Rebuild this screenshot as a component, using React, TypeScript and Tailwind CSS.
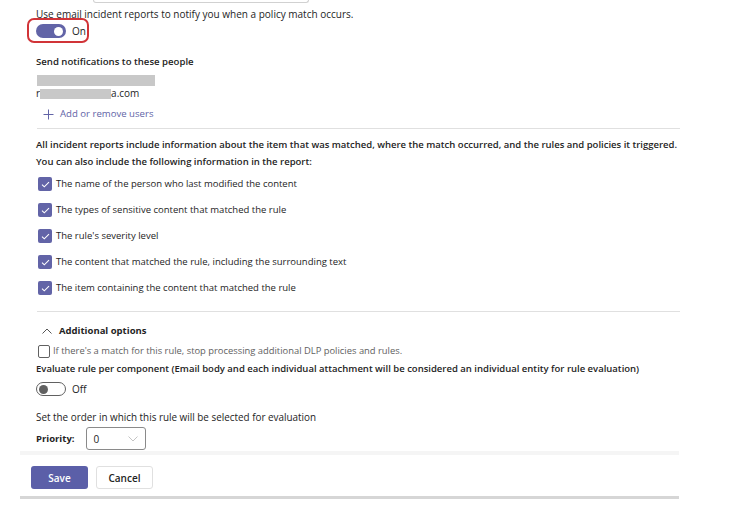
import React from "react"

const font = { fontFamily: '"Open Sans", "Noto Sans", sans-serif' }

const Check = ({ checked, label }: { checked: boolean; label: string }) => {
  return (
    <div className="flex items-center h-[14px]">
      {checked ? (
        <div className="w-[14px] h-[14px] ml-[2px] rounded-[2px] bg-[#6264a7] flex items-center justify-center">
          <svg width="9" height="7" viewBox="0 0 9 7" fill="none">
            <path d="M1 3.6 L3.3 5.8 L8 1.2" stroke="white" strokeWidth="1.1" />
          </svg>
        </div>
      ) : (
        <div className="w-[12px] h-[13px] ml-[2px] rounded-[2px] border border-[#616161] bg-white"></div>
      )}
      <span className={checked ? "ml-[4px] text-[9.5px] text-[#242424]" : "ml-[3px] text-[9.4px] text-[#616161]"}>{label}</span>
    </div>
  )
}

const items = [
  "The name of the person who last modified the content",
  "The types of sensitive content that matched the rule",
  "The rule's severity level",
  "The content that matched the rule, including the surrounding text",
  "The item containing the content that matched the rule",
]

export default function App() {
  return (
    <div className="w-[747px] h-[506px] bg-white overflow-hidden text-[10px] leading-[14px] text-[#242424] whitespace-nowrap" style={font}>
      {/* bottom of the box above */}
      <div className="ml-[93px] w-[216px] h-[3px] border-x border-b border-[#d1d1d1] rounded-b-[3px]"></div>

      <div className="ml-[20px] w-[659px]">
        <div className="pl-[16px]">
          <div className="mt-[4px]">Use email incident reports to notify you when a policy match occurs.</div>

          {/* toggle on */}
          <div className="relative mt-[3px] h-[14px] flex items-center">
            <div className="absolute -left-[9px] -top-[6px] w-[62px] h-[25px] border-2 border-[#d13438] rounded-[7px]"></div>
            <div className="w-[30px] h-[14px] rounded-full bg-[#6264a7] flex items-center justify-end pr-[3px]">
              <div className="w-[9px] h-[9px] rounded-full bg-white"></div>
            </div>
            <span className="ml-[6px]">On</span>
          </div>

          <div className="mt-[17px] font-semibold text-[9.6px]">Send notifications to these people</div>
          <div className="mt-[6px] ml-[1px] w-[118px] h-[11px] bg-[#c8c8c8]"></div>
          <div className="mt-[1px] h-[13px] leading-[13px] flex items-center">
            <span>r</span>
            <div className="w-[71px] h-[10px] bg-[#c8c8c8]"></div>
            <span>a.com</span>
          </div>

          <div className="mt-[7px] flex items-center text-[#6264a7] text-[9.6px]">
            <svg width="11" height="11" viewBox="0 0 11 11" className="ml-[7px]">
              <path d="M5.5 0.5 V10.5 M0.5 5.5 H10.5" stroke="#6264a7" strokeWidth="1" />
            </svg>
            <span className="ml-[6px]">Add or remove users</span>
          </div>
        </div>

        <div className="mt-[7px] ml-[17px] w-[643px] h-px bg-[#e0e0e0]"></div>

        <div className="pl-[16px]">
          <div className="mt-[9px] font-semibold text-[9.5px]">
            All incident reports include information about the item that was matched, where the match occurred, and the rules and policies it triggered.
          </div>
          <div className="mt-[3px] font-semibold text-[9.5px]">You can also include the following information in the report:</div>

          <div className="mt-[8px] flex flex-col gap-[12px]">
            {items.map((t) => (
              <Check key={t} checked label={t} />
            ))}
          </div>
        </div>

        <div className="mt-[16px] ml-[17px] w-[643px] h-px bg-[#e0e0e0]"></div>

        <div className="pl-[16px]">
          <div className="mt-[12px] flex items-center font-bold text-[9.5px]">
            <svg width="10" height="6" viewBox="0 0 10 6" className="ml-[6px]" fill="none">
              <path d="M0.5 5.5 L5 1 L9.5 5.5" stroke="#424242" strokeWidth="0.9" />
            </svg>
            <span className="ml-[7px]">Additional options</span>
          </div>

          <div className="mt-[6px]">
            <Check checked={false} label="If there's a match for this rule, stop processing additional DLP policies and rules." />
          </div>

          <div className="mt-[4px] font-semibold text-[9.5px]">
            Evaluate rule per component (Email body and each individual attachment will be considered an individual entity for rule evaluation)
          </div>

          {/* toggle off */}
          <div className="mt-[6px] h-[14px] flex items-center">
            <div className="w-[30px] h-[14px] rounded-full border border-[#616161] bg-white flex items-center pl-[2px]">
              <div className="w-[9px] h-[9px] rounded-full bg-[#616161]"></div>
            </div>
            <span className="ml-[6px]">Off</span>
          </div>

          <div className="mt-[14px] text-[9.9px]">Set the order in which this rule will be selected for evaluation</div>

          <div className="mt-[3px] flex items-center">
            <span className="font-bold text-[9.5px]">Priority:</span>
            <div className="ml-[11px] w-[60px] h-[23px] border border-[#8a8a8a] rounded-[3px] flex items-center justify-between px-[7px]">
              <span>0</span>
              <svg width="10" height="6" viewBox="0 0 10 6" fill="none">
                <path d="M0.5 0.5 L5 5 L9.5 0.5" stroke="#bdbdbd" strokeWidth="0.9" />
              </svg>
            </div>
          </div>
        </div>

        <div className="mt-[1px] h-[4px] bg-[#f5f5f5]"></div>

        <div className="mt-[11px] ml-[11px] flex gap-[8px]">
          <button className="w-[57px] h-[23px] rounded-[3px] bg-[#5b5fa8] text-white font-semibold">Save</button>
          <button className="w-[57px] h-[23px] rounded-[3px] bg-white border border-[#e0e0e0] font-semibold">Cancel</button>
        </div>

        <div className="mt-[7px] h-[3px] bg-[#d6d6d6]"></div>
      </div>
    </div>
  )
}
